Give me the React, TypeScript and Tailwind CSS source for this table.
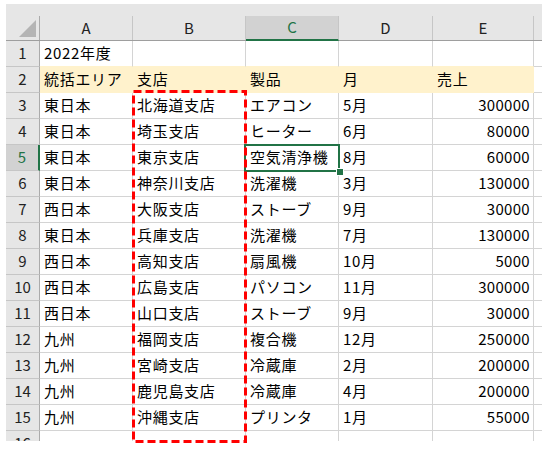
import React from "react";

const rows: string[][] = [
    ["2022年度", "", "", "", ""],
    ["統括エリア", "支店", "製品", "月", "売上"],
    ["東日本", "北海道支店", "エアコン", "5月", "300000"],
    ["東日本", "埼玉支店", "ヒーター", "6月", "80000"],
    ["東日本", "東京支店", "空気清浄機", "8月", "60000"],
    ["東日本", "神奈川支店", "洗濯機", "3月", "130000"],
    ["西日本", "大阪支店", "ストーブ", "9月", "30000"],
    ["東日本", "兵庫支店", "洗濯機", "7月", "130000"],
    ["西日本", "高知支店", "扇風機", "10月", "5000"],
    ["西日本", "広島支店", "パソコン", "11月", "300000"],
    ["西日本", "山口支店", "ストーブ", "9月", "30000"],
    ["九州", "福岡支店", "複合機", "12月", "250000"],
    ["九州", "宮崎支店", "冷蔵庫", "2月", "200000"],
    ["九州", "鹿児島支店", "冷蔵庫", "4月", "200000"],
    ["九州", "沖縄支店", "プリンタ", "1月", "55000"],
    ["", "", "", "", ""],
];

const cols = ["A", "B", "C", "D", "E"];

export default function App() {
    return (
        <div className="relative w-[550px] h-[450px] bg-white overflow-hidden text-black" style={{ fontFamily: '"Noto Sans CJK JP", "Noto Sans", sans-serif' }}>
            <div className="absolute left-[6px] top-[4px] w-[536px] h-[437px] overflow-hidden">
                <div className="h-[12px] bg-[#e6e6e6]" />
                {/* column headers */}
                <div className="grid grid-cols-[34px_93px_113px_93px_94px_101px_8px] h-[25px] bg-[#e6e6e6] border-b border-[#9e9e9e] text-[15px] text-[#222]">
                    <div className="relative border-r border-[#ababab]">
                        <div className="absolute right-[3px] bottom-[3px] w-0 h-0 border-l-[17px] border-l-transparent border-b-[17px] border-b-[#b4b4b4]" />
                    </div>
                    {cols.map((c) => (
                        <div
                            key={c}
                            className={c === "C"
                                ? "flex items-center justify-center bg-[#d2d2d2] border-r border-[#c6c6c6] border-b-2 border-b-[#217346] -mb-px text-[#217346]"
                                : "flex items-center justify-center border-r border-[#c6c6c6]"}
                        >
                            {c}
                        </div>
                    ))}
                    <div />
                </div>
                {/* body */}
                {rows.map((r, i) => {
                    const n = i + 1;
                    const yellow = n === 2;
                    return (
                        <div key={n} className="grid grid-cols-[34px_93px_113px_93px_94px_101px_8px] h-[26px] text-[15px]">
                            <div
                                className={n === 5
                                    ? "flex items-center justify-center bg-[#d2d2d2] border-b border-[#c6c6c6] border-r-2 border-r-[#217346] text-[#217346]"
                                    : "flex items-center justify-center bg-[#e6e6e6] border-b border-[#c6c6c6] border-r border-r-[#ababab] text-[#222]"}
                            >
                                {n}
                            </div>
                            {r.map((v, j) => (
                                <div
                                    key={j}
                                    className={
                                        (yellow
                                            ? "bg-[#fff2cc] border-r border-r-[#fff2cc] border-b border-b-[#fff2cc] "
                                            : n === 1
                                                ? "border-r border-r-[#d4d4d4] border-b border-b-[#fff2cc] "
                                                : "border-r border-r-[#d4d4d4] border-b border-b-[#d4d4d4] ") +
                                        (j === 4 && n > 2
                                            ? "flex items-center justify-end pr-[3px] whitespace-nowrap tracking-[0.3px]"
                                            : "flex items-center pl-[4px] whitespace-nowrap tracking-[0.7px]")
                                    }
                                >
                                    {v}
                                </div>
                            ))}
                            <div className="border-b border-[#d4d4d4]" />
                        </div>
                    );
                })}
                {/* active cell C5 */}
                <div className="absolute left-[238px] top-[140px] w-[96px] h-[28px] border-2 border-[#217346]" />
                <div className="absolute left-[331px] top-[165px] w-[6px] h-[6px] bg-[#217346] outline outline-1 outline-white" />
            </div>
            {/* copy marquee around B3:B16 */}
            <svg className="absolute left-0 top-0" width="550" height="450">
                <rect x="133.5" y="91.5" width="112" height="350" fill="none" stroke="#ff0000" strokeWidth="3" strokeDasharray="8 4" />
            </svg>
        </div>
    );
}
